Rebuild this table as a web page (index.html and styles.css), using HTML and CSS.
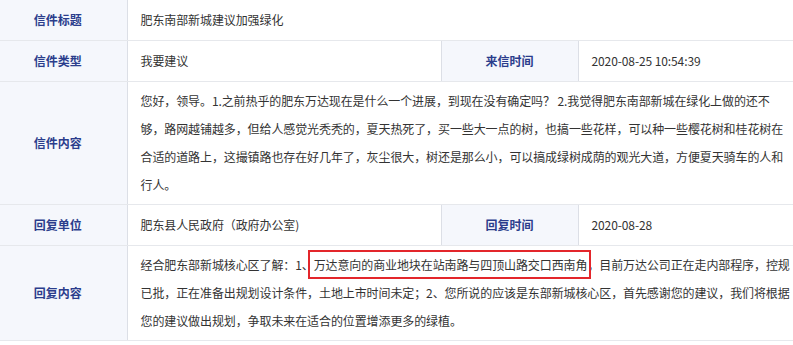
FILE: index.html
```html
<!DOCTYPE html>
<html lang="zh-CN">
<head>
<meta charset="utf-8">
<title>信件详情</title>
<link rel="stylesheet" href="styles.css">
</head>
<body>
<table class="detail">
  <colgroup>
    <col class="c-label">
    <col class="c-value">
    <col class="c-label2">
    <col class="c-value2">
  </colgroup>
  <tr>
    <th class="label">信件标题</th>
    <td class="value" colspan="3">肥东南部新城建议加强绿化</td>
  </tr>
  <tr>
    <th class="label">信件类型</th>
    <td class="value">我要建议</td>
    <th class="label label2">来信时间</th>
    <td class="value">2020-08-25 10:54:39</td>
  </tr>
  <tr>
    <th class="label">信件内容</th>
    <td class="value" colspan="3">您好，领导。1.之前热乎的肥东万达现在是什么一个进展，到现在没有确定吗？ 2.我觉得肥东南部新城在绿化上做的还不够，路网越铺越多，但给人感觉光秃秃的，夏天热死了，买一些大一点的树，也搞一些花样，可以种一些樱花树和桂花树在合适的道路上，这撮镇路也存在好几年了，灰尘很大，树还是那么小，可以搞成绿树成荫的观光大道，方便夏天骑车的人和行人。</td>
  </tr>
  <tr>
    <th class="label">回复单位</th>
    <td class="value">肥东县人民政府（政府办公室)</td>
    <th class="label label2">回复时间</th>
    <td class="value">2020-08-28</td>
  </tr>
  <tr class="last">
    <th class="label">回复内容</th>
    <td class="value" colspan="3">经合肥东部新城核心区了解：1、<span class="mark">万达意向的商业地块在站南路与四顶山路交口西南角</span>，目前万达公司正在走内部程序，控规已批，正在准备出规划设计条件，土地上市时间未定；2、您所说的应该是东部新城核心区，首先感谢您的建议，我们将根据您的建议做出规划，争取未来在适合的位置增添更多的绿植。</td>
  </tr>
</table>
</body>
</html>
```

FILE: styles.css
```css
html, body {
  margin: 0;
  padding: 0;
  background: #ffffff;
  overflow: hidden;
}

body {
  font-family: "Noto Sans CJK SC", "Microsoft YaHei", "Noto Sans", sans-serif;
  font-size: 12px;
  color: #333333;
}

.detail {
  border-collapse: collapse;
  table-layout: fixed;
  width: 800px;
}

.c-label { width: 127px; }
.c-value { width: 314px; }
.c-label2 { width: 137px; }
.c-value2 { width: 222px; }

.detail th,
.detail td {
  height: 30px;
  padding: 5px 13px;
  line-height: 28px;
  border-bottom: 1px solid #e6e8ec;
  vertical-align: middle;
}

.label {
  background: #f5f7fc;
  color: #2b3d8c;
  font-weight: bold;
  text-align: center;
  border-right: 1px solid #dcdfe6;
}

.detail th.label {
  padding: 5px 24px 5px 13px;
}

.detail th.label2 {
  padding: 5px 13px;
  border-left: 1px solid #dcdfe6;
}

.value {
  text-align: left;
  color: #333333;
}

.detail td.value {
  padding-right: 9px;
  letter-spacing: -0.1px;
  word-break: break-all;
}

.mark {
  position: relative;
}

.mark::after {
  content: "";
  position: absolute;
  left: -6px;
  right: -4px;
  top: -6px;
  bottom: -6px;
  border: 2px solid #e3262b;
  pointer-events: none;
}
```
